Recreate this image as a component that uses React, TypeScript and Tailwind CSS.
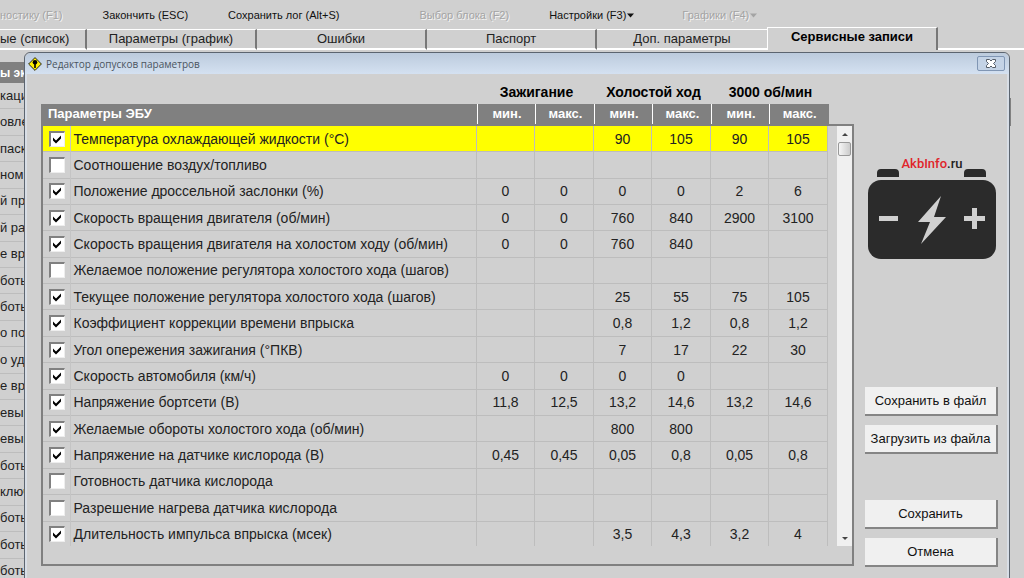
import React from 'react';
import clsx from 'clsx';

interface Param {
  name: string;
  checked: boolean;
  // min / max for ignition, idle and 3000 rpm
  values: string[];
}

const params: Param[] = [
  { name: 'Температура охлаждающей жидкости (°C)', checked: true, values: ['', '', '90', '105', '90', '105'] },
  { name: 'Соотношение воздух/топливо', checked: false, values: ['', '', '', '', '', ''] },
  { name: 'Положение дроссельной заслонки (%)', checked: true, values: ['0', '0', '0', '0', '2', '6'] },
  { name: 'Скорость вращения двигателя (об/мин)', checked: true, values: ['0', '0', '760', '840', '2900', '3100'] },
  { name: 'Скорость вращения двигателя на холостом ходу (об/мин)', checked: true, values: ['0', '0', '760', '840', '', ''] },
  { name: 'Желаемое положение регулятора холостого хода (шагов)', checked: false, values: ['', '', '', '', '', ''] },
  { name: 'Текущее положение регулятора холостого хода (шагов)', checked: true, values: ['', '', '25', '55', '75', '105'] },
  { name: 'Коэффициент коррекции времени впрыска', checked: true, values: ['', '', '0,8', '1,2', '0,8', '1,2'] },
  { name: 'Угол опережения зажигания (°ПКВ)', checked: true, values: ['', '', '7', '17', '22', '30'] },
  { name: 'Скорость автомобиля (км/ч)', checked: true, values: ['0', '0', '0', '0', '', ''] },
  { name: 'Напряжение бортсети (В)', checked: true, values: ['11,8', '12,5', '13,2', '14,6', '13,2', '14,6'] },
  { name: 'Желаемые обороты холостого хода (об/мин)', checked: true, values: ['', '', '800', '800', '', ''] },
  { name: 'Напряжение на датчике кислорода (В)', checked: true, values: ['0,45', '0,45', '0,05', '0,8', '0,05', '0,8'] },
  { name: 'Готовность датчика кислорода', checked: false, values: ['', '', '', '', '', ''] },
  { name: 'Разрешение нагрева датчика кислорода', checked: false, values: ['', '', '', '', '', ''] },
  { name: 'Длительность импульса впрыска (мсек)', checked: true, values: ['', '', '3,5', '4,3', '3,2', '4'] },
];

const backRows = [
  'каци', 'овле', 'паск', 'ном', 'й пр', 'й ра', 'е вр', 'боть', 'боть', 'о по',
  'о уда', 'е вр', 'евыш', 'евыш', 'боть', 'ключе', 'боть', 'боть', 'боть',
];

const tabs = ['Параметры (график)', 'Ошибки', 'Паспорт', 'Доп. параметры'];

const Caret = () => (
  <svg width="8" height="5" viewBox="0 0 8 5" fill="currentColor" aria-hidden="true">
    <path d="M1 .5h7L4.500 4.500z" />
  </svg>
);

const MenuItem = ({ label, disabled, caret }: { label: string; disabled?: boolean; caret?: boolean }) => (
  <button
    disabled={disabled}
    className={clsx(
      'flex items-center whitespace-nowrap',
      disabled ? 'text-[#a4a4a4] [text-shadow:1px_1px_0_#f4f4f4]' : 'text-[#111]'
    )}
  >
    {label}
    {caret && <Caret />}
  </button>
);

const ValueCols = () => (
  <>
    <col className="w-[58px]" />
    <col className="w-[59px]" />
    <col className="w-[58px]" />
    <col className="w-[59px]" />
    <col className="w-[58px]" />
    <col className="w-[59px]" />
  </>
);

const HeaderTable = () => (
  <table className="w-full table-fixed border-collapse">
    <colgroup>
      <col />
      <ValueCols />
    </colgroup>
    <thead>
      <tr className="h-6 text-[14px] leading-4 text-black">
        <td />
        <th colSpan={2}>Зажигание</th>
        <th colSpan={2} className="whitespace-nowrap">Холостой ход</th>
        <th colSpan={2}>3000 об/мин</th>
      </tr>
      <tr className="h-5 bg-[#808080] text-[13px] leading-4 text-white">
        <th className="pl-[7px] text-left">Параметры ЭБУ</th>
        {[0, 1, 2].map((i) => (
          <React.Fragment key={i}>
            <th className="border-l border-white">мин.</th>
            <th className="border-l border-white">макс.</th>
          </React.Fragment>
        ))}
      </tr>
    </thead>
  </table>
);

const CheckBox = ({ id, checked }: { id: string; checked: boolean }) => (
  <span className="grid size-4">
    <input
      id={id}
      type="checkbox"
      defaultChecked={checked}
      className="peer col-start-1 row-start-1 size-4 appearance-none border-t-2 border-r border-b border-l-2 border-t-[#808080] border-l-[#808080] border-r-[#eee] border-b-[#eee] bg-white"
    />
    <svg
      viewBox="0 0 16 16"
      className="pointer-events-none invisible col-start-1 row-start-1 size-4 peer-checked:visible"
      aria-hidden="true"
    >
      <path d="M4 6.5 7 9.5 12 4.5V7.5L7 12.5 4 9.5z" fill="#000" />
    </svg>
  </span>
);

const ParamTable = () => (
  <table className="h-[422px] w-full table-fixed border-collapse">
    <colgroup>
      <col className="w-[27px]" />
      <col />
      <ValueCols />
    </colgroup>
    <tbody>
      {params.map((p, i) => (
        <tr key={p.name} className={clsx('border-b border-[#bdbdbd]', i === 0 && 'bg-[#ffff00]')}>
          <td className="border-r border-[#c4c4c4] p-0 pl-[6px]">
            <CheckBox id={`param-${i}`} checked={p.checked} />
          </td>
          <td className="p-0 pl-[3px] whitespace-nowrap">
            <label htmlFor={`param-${i}`}>{p.name}</label>
          </td>
          {p.values.map((v, j) => (
            <td key={j} className="border-x border-[#bdbdbd] p-0 text-center">{v}</td>
          ))}
        </tr>
      ))}
    </tbody>
  </table>
);

const ScrollBar = () => (
  <div className="flex w-[15px] shrink-0 flex-col items-center bg-[#f0f0f0] text-[#444]">
    <svg width="15" height="16" viewBox="0 0 15 16" fill="currentColor" aria-hidden="true">
      <path d="M5 10h6L8 7z" />
    </svg>
    <div className="h-[14px] w-[13px] rounded-xs border border-[#999] bg-linear-to-r from-[#f6f6f6] to-[#ccc]" />
    <svg className="mt-auto" width="15" height="15" viewBox="0 0 15 15" fill="currentColor" aria-hidden="true">
      <path d="M5 6h6L8 9z" />
    </svg>
  </div>
);

const BatteryLogo = () => (
  <div className="flex flex-col items-center">
    <div className="font-[Roboto] text-[13px] leading-4 font-medium text-[#222]">
      <span className="text-[#e0252b]">AkbInfo</span>.ru
    </div>
    <svg className="-mt-1 w-full" viewBox="0 0 128 92" aria-hidden="true">
      <path d="M9 9V5q0-4 4-4h14q4 0 4 4v4zM96 9V5q0-4 4-4h14q4 0 4 4v4z" fill="#2b2b2b" />
      <rect x="0" y="12" width="128" height="79" rx="13" fill="#2b2b2b" />
      <path d="M11 48h19v5H11zM96 48h8v-8h5v8h8v5h-8v8h-5v-8h-8z" fill="#d0d0d0" />
      <path d="M73 28 50 54h12l-9 22 25-27H66z" fill="#d0d0d0" />
    </svg>
  </div>
);

const SideButton = ({ children }: { children: React.ReactNode }) => (
  <button className="h-[29px] w-full border-r-2 border-b-2 border-[#858585] bg-[#f0f0f0] text-[13px] leading-4 whitespace-nowrap text-[#111]">
    {children}
  </button>
);

const ToleranceDialog = () => (
  <section
    role="dialog"
    aria-labelledby="dialog-title"
    className="absolute top-[52px] right-[14px] -bottom-2 left-6 flex flex-col rounded-t-md border border-[#5c6570] bg-[#d0d0d0]"
  >
    <header className="flex h-[21px] shrink-0 items-center rounded-t-md bg-linear-to-b from-[#bccbdd] to-[#d4e1f1] pr-1 pl-[3px]">
      <svg width="14" height="14" viewBox="0 0 14 14" aria-hidden="true">
        <path d="M7 .6 13.4 7 7 13.4.6 7z" fill="#ffee00" stroke="#222" />
        <circle cx="7" cy="5.2" r="2.3" />
        <path d="M6.2 6h1.6v5H6.2z" />
      </svg>
      <h1 id="dialog-title" className="ml-1 font-['Open_Sans'] text-[10px] leading-4 text-[#4a5460]">
        Редактор допусков параметров
      </h1>
      <button
        aria-label="Закрыть"
        className="ml-auto flex h-[15px] w-7 items-center justify-center rounded-xs border border-[#8096b4] bg-[#c4d3e6]"
      >
        <svg width="10" height="9" viewBox="0 0 10 9" aria-hidden="true">
          <path d="M.5.5h3L5 2 6.500.5h3v2l-2 2 2 2v2h-3L5 7 3.500 8.500h-3v-2l2-2-2-2z" fill="#fff" stroke="#555d68" />
        </svg>
      </button>
    </header>

    <div className="flex flex-1 border-x-2 border-[#d8dee6] pt-[6px] pr-[9px] pl-[14px]">
      <div className="min-w-0 flex-1">
        <div className="pr-[25px]">
          <HeaderTable />
        </div>
        <div className="flex border-2 border-[#808080] pb-[18px] text-[14px] leading-4 text-[#222]">
          <div className="h-[420px] min-w-0 flex-1 overflow-hidden">
            <ParamTable />
          </div>
          <div className="ml-[9px] flex">
            <ScrollBar />
          </div>
        </div>
      </div>

      <aside className="ml-[11px] flex w-[133px] shrink-0 flex-col">
        <div className="mt-[76px] pr-[2px] pl-[3px]">
          <BatteryLogo />
        </div>
        <div className="mt-[127px] flex flex-col gap-[9px]">
          <SideButton>Сохранить в файл</SideButton>
          <SideButton>Загрузить из файла</SideButton>
        </div>
        <div className="mt-[46px] flex flex-col gap-[9px]">
          <SideButton>Сохранить</SideButton>
          <SideButton>Отмена</SideButton>
        </div>
      </aside>
    </div>
  </section>
);

export default function App() {
  return (
    <div className="relative flex h-screen flex-col overflow-hidden bg-[#d0d0d0] font-['Liberation_Sans',sans-serif]">
      <nav className="flex h-[27px] shrink-0 items-center gap-10 pt-[3px] text-[11px] leading-4">
        <MenuItem label="ностику (F1)" disabled />
        <MenuItem label="Закончить (ESC)" />
        <MenuItem label="Сохранить лог (Alt+S)" />
        <div className="ml-10">
          <MenuItem label="Выбор блока (F2)" disabled />
        </div>
        <MenuItem label="Настройки (F3)" caret />
        <div className="ml-2">
          <MenuItem label="Графики (F4)" disabled caret />
        </div>
      </nav>

      <div role="tablist" className="flex h-[23px] shrink-0 items-end text-[13px] leading-4 text-[#222]">
        <button
          role="tab"
          className="h-[21px] w-[87px] shrink-0 border-t border-r-2 border-b-2 border-t-white border-r-[#777] border-b-white pr-[18px] text-right whitespace-nowrap"
        >
          ые (список)
        </button>
        {tabs.map((tab, i) => (
          <button
            key={tab}
            role="tab"
            className={clsx(
              'h-[21px] w-[170px] shrink-0 border-t border-b-2 border-t-white border-b-white pb-px',
              i < tabs.length - 1 && 'border-r-2 border-r-[#777]'
            )}
          >
            {tab}
          </button>
        ))}
        <button
          role="tab"
          aria-selected="true"
          className="h-[23px] w-[171px] shrink-0 border-t border-r-2 border-l border-t-white border-r-[#777] border-l-white pb-1 font-bold text-black"
        >
          Сервисные записи
        </button>
        <div className="flex-1 border-b-2 border-white" />
      </div>

      {/* list of the main window, mostly hidden by the dialog */}
      <div className="flex flex-1 items-start justify-between pt-3">
        <div className="w-24 text-[13px] leading-4 whitespace-nowrap text-[#222]">
          <div className="flex h-[21px] items-center bg-[#808080] text-[12px] font-bold text-white">ы эк</div>
          <div className="grid h-[502px] auto-rows-fr">
            {backRows.map((row, i) => (
              <div key={i} className="flex items-center border-b border-[#bdbdbd]">{row}</div>
            ))}
          </div>
        </div>
        <div className="mt-9 mr-[13px] h-7 w-[3px] bg-[#808080]" />
      </div>

      <ToleranceDialog />
    </div>
  );
}
